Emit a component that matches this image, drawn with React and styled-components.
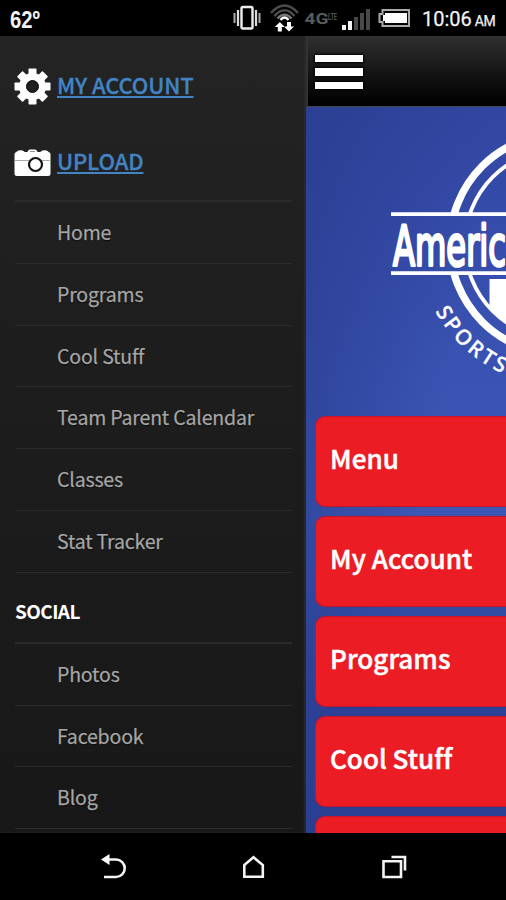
import styled, {createGlobalStyle} from 'styled-components'

const GlobalStyle = createGlobalStyle`
  * {
    box-sizing: border-box;
  }

  body {
    margin: 0;
    background-color: #000;
    font-family: 'Noto Sans CJK JP', 'Noto Sans', sans-serif;
  }
`

const Phone = styled.div`
  display: flex;
  flex-direction: column;
  width: 506px;
  height: 900px;
  overflow: hidden;
`

const StatusBar = styled.header`
  display: flex;
  justify-content: space-between;
  height: 36px;
  padding: 0 11px 0 10px;
  background-color: #000;
  color: #f2f2f2;
`

const Temperature = styled.span`
  font: bold 23.5px/40px 'Liberation Sans', sans-serif;
  transform: scaleX(.86);
  transform-origin: left;
`

const StatusRight = styled.div`
  display: flex;
`

const Clock = styled.div`
  width: 75px;
  padding-left: 2px;
  font: 20px/38px Roboto, sans-serif;
  letter-spacing: 0;
  white-space: nowrap;
  -webkit-text-stroke: .25px;

  & small {
    margin-left: 3px;
    font-size: 14px;
    letter-spacing: -.5px;
  }
`

const Body = styled.main`
  display: flex;
  height: 797px;
  overflow: hidden;
`

const Drawer = styled.nav`
  flex: 0 0 306px;
  padding: 12px 14px 0 15px;
  background: linear-gradient(#242424, #1e1e1e 35%, #181818);
  box-shadow: inset -2px 0 2px #2b2b2a;
`

const ActionRow = styled.div`
  display: flex;
  align-items: center;
  height: 76px;
  padding-bottom: 2px;

  & svg {
    margin: 2px 6px 0 -1px;
  }
`

const ActionLink = styled.a`
  margin-top: -3px;
  color: #4284c4;
  font-size: 22px;
  font-weight: 500;
  line-height: 32px;
  letter-spacing: -.15px;
  text-decoration: underline;
  text-decoration-thickness: 2px;
  text-underline-offset: 2px;
  -webkit-text-stroke: .3px;
`

const List = styled.ul`
  margin: 0;
  padding: 0;
  border-top: 2px solid #2a2a2a;
  list-style: none;
`

const Item = styled.li`
  height: 61.8px;
  padding-left: 42px;
  border-bottom: 1px solid #2b2b2b;
  color: #a6a6a6;
  font-size: 19.5px;
  line-height: 60px;
  letter-spacing: -.17px;
  text-shadow: 0 1px 1px #000;
  -webkit-text-stroke: .25px;
`

const SectionTitle = styled.h2`
  height: 69px;
  margin: 0;
  color: #fff;
  font-size: 19px;
  font-weight: bold;
  line-height: 76px;
  letter-spacing: -.6px;
`

const Page = styled.section`
  flex: 1;
  min-width: 0;
  overflow: hidden;
  background: linear-gradient(100deg, #2b3f92, rgba(43, 63, 146, 0) 60%),
    linear-gradient(#2e439a, #364cab 24%, #3a53b3 43%, #3c58b4 60%, #2c4296 82%, #2b3f92);
`

const TopBar = styled.div`
  display: flex;
  align-items: center;
  height: 71px;
  padding: 2px 0 0 7px;
  border-left: 2px solid #333;
  border-bottom: 1px solid #46464c;
  background: linear-gradient(#303030, #111 60%, #000);
`

const Burger = styled.div`
  display: flex;
  flex-direction: column;
  gap: 6px;
  width: 48px;

  & i {
    height: 7.5px;
    background-color: #fff;
    box-shadow: 0 0 2px 1px #000;
  }
`

const Banner = styled.div`
  height: 309px;

  & svg {
    display: block;
  }
`

const Tiles = styled.div`
  display: flex;
  flex-direction: column;
  gap: 9px;
  padding-left: 9px;
`

const Tile = styled.div`
  flex: 0 0 91px;
  padding-left: 14px;
  border: 1px solid #c5132b;
  border-right: 0;
  border-radius: 10px 0 0 10px;
  background-color: #ec1c24;
  color: #fff;
  font-size: 26px;
  font-weight: 500;
  line-height: 81px;
  letter-spacing: .05px;
  white-space: nowrap;
  -webkit-text-stroke: .5px;
`

const NavBar = styled.footer`
  height: 67px;
  background-color: #000;
`

const pages = ['Home', 'Programs', 'Cool Stuff', 'Team Parent Calendar', 'Classes', 'Stat Tracker']
const social = ['Photos', 'Facebook', 'Blog']
const tiles = ['Menu', 'My Account', 'Programs', 'Cool Stuff', '']

const StatusIcons = () => (
  <svg width='190' height='36' viewBox='230 0 190 36' fill='none'>
    {/* vibrate */}
    <rect x='241.500' y='7' width='11' height='21.500' rx='1.500' stroke='#eee' strokeWidth='2.400'/>
    <path d='M238 10v16M256 10v16' stroke='#ddd' strokeWidth='2.200'/>
    <path d='M234.500 13v10M259.500 13v10' stroke='#aaa' strokeWidth='2'/>
    {/* wifi */}
    <path d='M271 13Q284.500-2 298 13M274.500 16Q284.500 4.500 294.500 16' stroke='#4c4c4c' strokeWidth='2.500'/>
    <path d='M277.500 18.500Q284.500 11 291.500 18.500' stroke='#777' strokeWidth='2.300'/>
    <path d='M280.500 20q4-5 8 0' stroke='#fff' strokeWidth='2.500'/>
    <path d='M279.800 22l-5 5h3v4.500h4V27h3zM289 31.500l-5-5h3V22h4v4.500h3z' fill='#fff'/>
    <text x='304.500' y='24' textLength='24' lengthAdjust='spacingAndGlyphs' fill='#5a5a5a' fontFamily='Roboto' fontWeight='bold' fontSize='15'>4G</text>
    <text x='328' y='19.500' textLength='9' lengthAdjust='spacingAndGlyphs' fill='#555' fontFamily='Roboto' fontWeight='bold' fontSize='8.500'>LTE</text>
    {/* signal */}
    <path d='M342 25h4v5h-4zM348 21h4v9h-4z' fill='#f4f4f4'/>
    <path d='M354 17h4v13h-4zM360 13h4v17h-4zM366 9h4v21h-4z' fill='#484848'/>
    {/* battery */}
    <path d='M382.500 10H409v16h-26.500v-4H379.500v-8h3z' stroke='#aaa' strokeWidth='2'/>
    <path d='M385 13h22v10h-22v-2h-2v-6h2z' fill='#fff'/>
  </svg>
)

const GearIcon = () => (
  <svg width='37' height='37' viewBox='-18.500 -18.500 37 37' fill='#fff'>
    {[0, 45, 90, 135].map(angle => (
      <rect key={angle} x='-4' y='-18' width='8' height='36' rx='.8' transform={`rotate(${angle})`}/>
    ))}
    <circle r='13.500'/>
    <circle r='6' fill='#202020' stroke='#080808'/>
  </svg>
)

const CameraIcon = () => (
  <svg width='37' height='28' viewBox='0 0 37 28'>
    <path d='M3 4.500q3.500-2.500 7 0M27 4.500q3.500-2.500 7 0M14 4l2-1.500h5l2 1.500' fill='none' stroke='#fff' strokeWidth='2'/>
    <rect x='.5' y='4' width='36' height='24' rx='2.500' fill='#fff'/>
    <path d='M1 12.500h35' stroke='#aaa'/>
    <circle cx='21.500' cy='16.500' r='6.500' fill='#fff' stroke='#111' strokeWidth='2.200'/>
  </svg>
)

const Logo = () => (
  <svg width='200' height='309' viewBox='306 107 200 309' fill='none'>
    <defs>
      <clipPath id='bands'>
        <path d='M306 107h200v106H306zM306 274h200v142H306z'/>
      </clipPath>
      <clipPath id='disc'>
        <circle cx='560' cy='244' r='95'/>
      </clipPath>
      <path id='ring' d='M418.500 244A141.500 141.500 0 0 0 701.500 244'/>
    </defs>
    <g clipPath='url(#bands)' stroke='#fff'>
      <circle cx='560' cy='244' r='110' strokeWidth='7.500'/>
      <circle cx='560' cy='244' r='95' strokeWidth='3.800'/>
    </g>
    <path d='M391 214.200H506M391 273.200H506' stroke='#fff' strokeWidth='3.800'/>
    <path d='M489.500 279H506V340H489.500z' fill='#fff' clipPath='url(#disc)'/>
    <text
      x='393'
      y='265'
      textLength='113'
      lengthAdjust='spacingAndGlyphs'
      fill='#fff'
      stroke='#fff'
      strokeWidth='3.200'
      strokeLinejoin='round'
      fontFamily='DejaVu Sans'
      fontSize='55'
    >
      Americ
    </text>
    <text fill='#fff' stroke='#fff' strokeWidth='.4' fontFamily='Noto Sans' fontWeight='500' fontSize='21'>
      <textPath href='#ring' startOffset='70' textLength='93' lengthAdjust='spacing'>SPORTS</textPath>
    </text>
  </svg>
)

const NavIcons = () => (
  <svg width='506' height='67' viewBox='0 833 506 67' fill='none' stroke='#f4f4f4' strokeWidth='2.600'>
    <path d='M107 859.500h9a8.300 8.300 0 0 1 0 17.500h-12'/>
    <path d='M101 859.500l8.500-5.500v11z' fill='#fff' stroke='none'/>
    <path d='M244.300 876.800v-11.800l9.200-7.700 9.300 7.700v11.800z'/>
    <path d='M383.500 861.200h17.500v15.800h-17.500zM391.500 857h13.500v13.500'/>
  </svg>
)

const App = () => (
  <>
    <GlobalStyle/>
    <Phone>
      <StatusBar>
        <Temperature>62º</Temperature>
        <StatusRight>
          <StatusIcons/>
          <Clock>10:06<small>AM</small></Clock>
        </StatusRight>
      </StatusBar>
      <Body>
        <Drawer>
          <ActionRow>
            <GearIcon/>
            <ActionLink>MY ACCOUNT</ActionLink>
          </ActionRow>
          <ActionRow>
            <CameraIcon/>
            <ActionLink>UPLOAD</ActionLink>
          </ActionRow>
          <List>
            {pages.map(name => <Item key={name}>{name}</Item>)}
          </List>
          <SectionTitle>SOCIAL</SectionTitle>
          <List>
            {social.map(name => <Item key={name}>{name}</Item>)}
          </List>
        </Drawer>
        <Page>
          <TopBar>
            <Burger><i/><i/><i/></Burger>
          </TopBar>
          <Banner>
            <Logo/>
          </Banner>
          <Tiles>
            {tiles.map(name => <Tile key={name}>{name}</Tile>)}
          </Tiles>
        </Page>
      </Body>
      <NavBar>
        <NavIcons/>
      </NavBar>
    </Phone>
  </>
)

export default App
